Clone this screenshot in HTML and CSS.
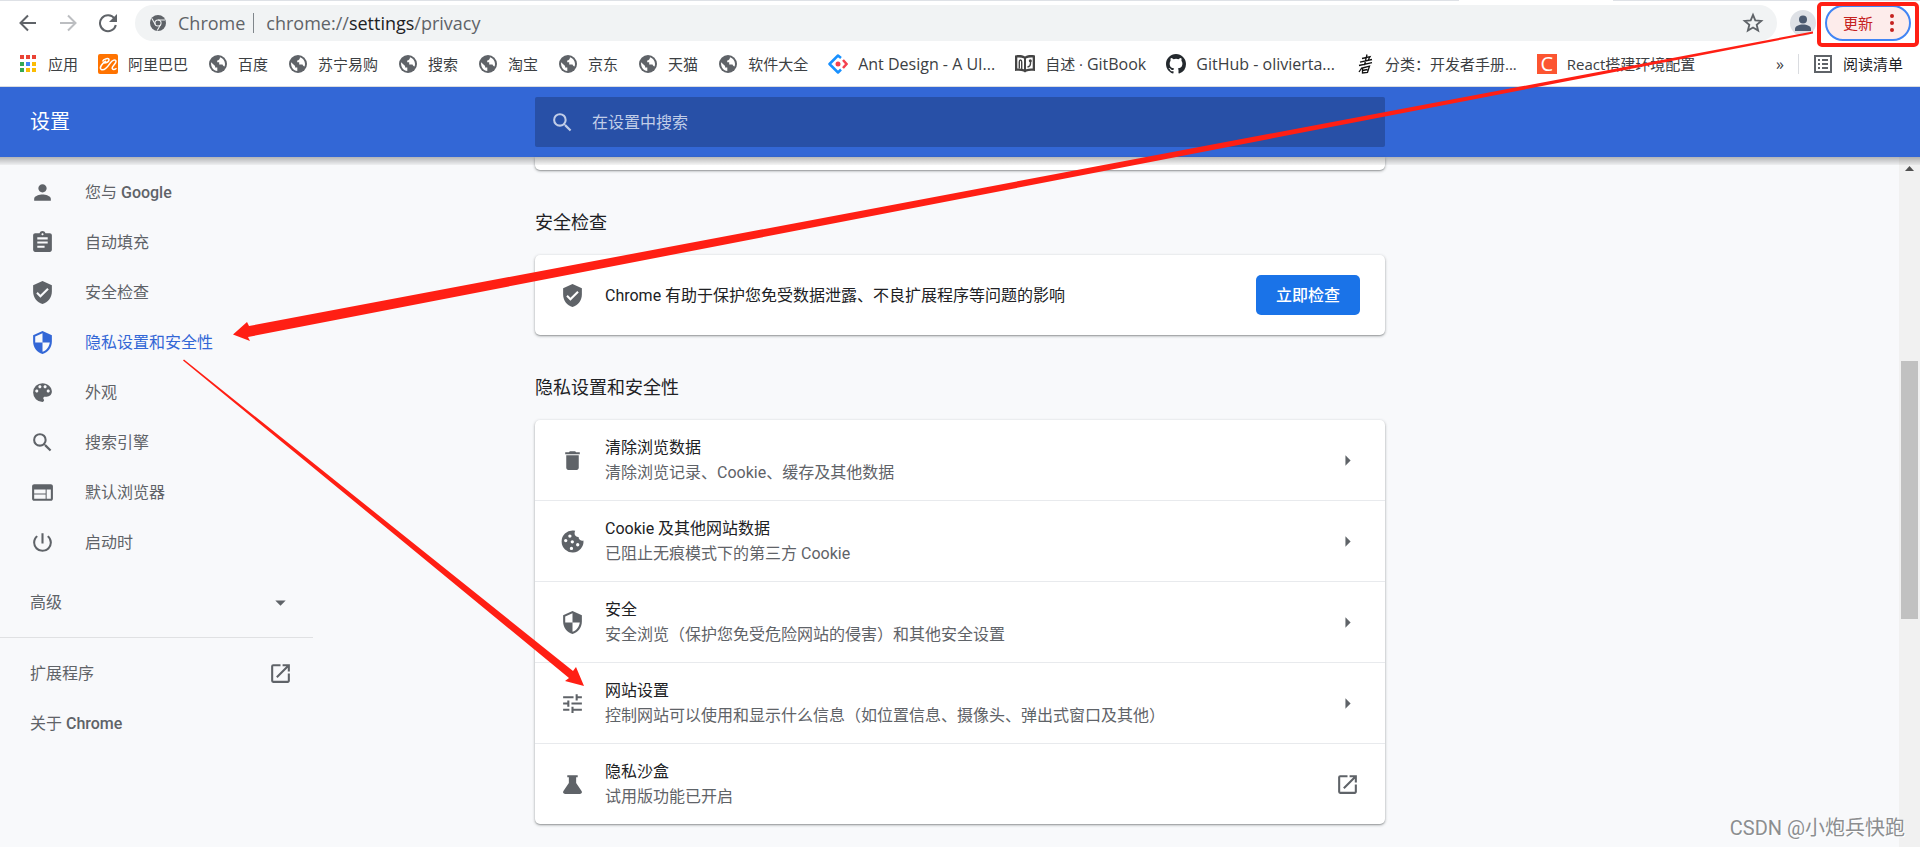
FILE: index.html
```html
<!DOCTYPE html>
<html lang="zh-CN">
<head>
<meta charset="utf-8">
<title>设置 - 隐私设置和安全性</title>
<link rel="stylesheet" href="styles.css">
</head>
<body>
<svg class="sprite" aria-hidden="true">
  <symbol id="globe" viewBox="0 0 20 20"><circle cx="10" cy="10" r="9" fill="#5f6368"/><path d="M12 3.200c2.900 1 5 3.700 5 6.800 0 1-.2 1.600-.5 2.400-.9-.2-1.600-.9-2-2H11.200V8.300h-2V6.600c1.600-.2 2.800-1.400 2.800-3.400zM3.100 8.300l4 3.700v1.500h2.200v3.400C5.700 16.700 2.600 13.500 3.100 8.300z" fill="#fff"/></symbol>
  <symbol id="search" viewBox="0 0 24 24"><path d="M15.500 14h-.79l-.28-.27A6.471 6.471 0 0 0 16 9.500 6.500 6.500 0 1 0 9.500 16c1.610 0 3.090-.59 4.230-1.570l.27.28v.79l5 4.990L20.490 19l-4.990-5zm-6 0C7.010 14 5 11.990 5 9.500S7.010 5 9.500 5 14 7.010 14 9.500 11.990 14 9.500 14z"/></symbol>
  <symbol id="person" viewBox="0 0 24 24"><path d="M12 12c2.210 0 4-1.790 4-4s-1.790-4-4-4-4 1.790-4 4 1.790 4 4 4zm0 2c-2.670 0-8 1.340-8 4v2h16v-2c0-2.660-5.330-4-8-4z"/></symbol>
  <symbol id="assignment" viewBox="0 0 24 24"><path d="M19 3h-4.180C14.400 1.840 13.300 1 12 1c-1.300 0-2.400.84-2.820 2H5c-1.100 0-2 .9-2 2v14c0 1.100.9 2 2 2h14c1.100 0 2-.9 2-2V5c0-1.100-.9-2-2-2zm-7 0c.55 0 1 .45 1 1s-.45 1-1 1-1-.45-1-1 .45-1 1-1zm2 14H7v-2h7v2zm3-4H7v-2h10v2zm0-4H7V7h10v2z"/></symbol>
  <symbol id="verified" viewBox="0 0 24 24"><path d="M12 1L3 5v6c0 5.550 3.840 10.740 9 12 5.160-1.260 9-6.450 9-12V5l-9-4zm-2 16l-4-4 1.410-1.410L10 14.170l6.590-6.590L18 9l-8 8z"/></symbol>
  <symbol id="shield" viewBox="0 0 24 24"><path d="M12 1L3 5v6c0 5.550 3.840 10.740 9 12 5.160-1.260 9-6.450 9-12V5l-9-4zm0 10.990h7c-.53 4.120-3.280 7.790-7 8.940V12H5V6.300l7-3.110v8.800z"/></symbol>
  <symbol id="palette" viewBox="0 0 24 24"><path d="M12 3a9 9 0 0 0 0 18c.83 0 1.500-.67 1.500-1.500 0-.39-.15-.74-.39-1.010-.23-.26-.38-.61-.38-.99 0-.83.67-1.500 1.500-1.500H16c2.760 0 5-2.240 5-5 0-4.420-4.030-8-9-8zm-5.500 9c-.83 0-1.500-.67-1.500-1.500S5.670 9 6.500 9 8 9.670 8 10.500 7.330 12 6.500 12zm3-4C8.670 8 8 7.330 8 6.500S8.670 5 9.500 5s1.500.67 1.500 1.500S10.330 8 9.500 8zm5 0c-.83 0-1.500-.67-1.500-1.500S13.670 5 14.500 5s1.500.67 1.500 1.500S15.330 8 14.500 8zm3 4c-.83 0-1.500-.67-1.500-1.500S16.670 9 17.500 9s1.500.67 1.500 1.500-.67 1.500-1.500 1.500z"/></symbol>
  <symbol id="web" viewBox="0 0 24 24"><path d="M20 4H4c-1.100 0-1.990.9-1.990 2L2 18c0 1.100.9 2 2 2h16c1.100 0 2-.9 2-2V6c0-1.100-.9-2-2-2zm-5 14H4v-4h11v4zm0-5H4V9h11v4zm5 5h-4V9h4v9z"/></symbol>
  <symbol id="power" viewBox="0 0 24 24"><path d="M13 3h-2v10h2V3zm4.830 2.170l-1.420 1.420A6.920 6.920 0 0 1 19 12a7 7 0 1 1-11.420-5.420L6.170 5.170A8.932 8.932 0 0 0 3 12a9 9 0 0 0 18 0c0-2.740-1.230-5.180-3.170-6.830z"/></symbol>
  <symbol id="down" viewBox="0 0 24 24"><path d="M7 10l5 5 5-5z"/></symbol>
  <symbol id="right" viewBox="0 0 24 24"><path d="M10 7l5 5-5 5z"/></symbol>
  <symbol id="launch" viewBox="0 0 24 24"><path d="M19 19H5V5h7V3H5a2 2 0 0 0-2 2v14a2 2 0 0 0 2 2h14c1.100 0 2-.9 2-2v-7h-2v7zM14 3v2h3.590l-9.830 9.830 1.410 1.410L19 6.410V10h2V3h-7z"/></symbol>
  <symbol id="trash" viewBox="0 0 24 24"><path d="M6 19c0 1.100.9 2 2 2h8c1.100 0 2-.9 2-2V7H6v12zM19 4h-3.500l-1-1h-5l-1 1H5v2h14V4z"/></symbol>
  <symbol id="cookie" viewBox="0 0 24 24"><path fill-rule="evenodd" d="M12.500 1.500A10.500 10.500 0 1 0 22.500 11a3.500 3.500 0 0 1-4.700-3.300 3.500 3.500 0 0 1-3.800-3.500c0-1 .1-1.700.6-2.500a9 9 0 0 0-2.100-.2zM9.500 5.200a1.600 1.600 0 1 1 0 3.200 1.600 1.600 0 0 1 0-3.200zM5.500 9.500a1.600 1.600 0 1 1 0 3.200 1.600 1.600 0 0 1 0-3.200zM11.800 10.700a1.600 1.600 0 1 1 0 3.200 1.600 1.600 0 0 1 0-3.200zM17 13.500a1.600 1.600 0 1 1 0 3.200 1.600 1.600 0 0 1 0-3.200zM11 17a1.600 1.600 0 1 1 0 3.200 1.600 1.600 0 0 1 0-3.200z"/></symbol>
  <symbol id="tune" viewBox="0 0 24 24"><path d="M3 17v2h6v-2H3zM3 5v2h10V5H3zm10 16v-2h8v-2h-8v-2h-2v6h2zM7 9v2H3v2h4v2h2V9H7zm14 4v-2H11v2h10zm-6-4h2V7h4V5h-4V3h-2v6z"/></symbol>
  <symbol id="flask" viewBox="0 0 24 24"><path d="M7 3h10v2h-1.500v5.500l5.200 7.800c.9 1.300 0 2.700-1.500 2.700H4.800c-1.500 0-2.400-1.400-1.500-2.700l5.200-7.800V5H7z"/></symbol>
</svg>

<header class="browser">
  <div class="toolbar">
    <nav class="history">
      <button class="tool" type="button" aria-label="后退"><svg viewBox="0 0 20 20"><path d="M18 10H3M10 2.500L2.500 10l7.500 7.500" fill="none" stroke="#5f6368" stroke-width="2"/></svg></button>
      <button class="tool" type="button" aria-label="前进"><svg viewBox="0 0 20 20"><path d="M2 10h15M10 2.500l7.500 7.500-7.500 7.500" fill="none" stroke="#bcbec1" stroke-width="2"/></svg></button>
      <button class="tool" type="button" aria-label="重新加载"><svg viewBox="0 0 20 20"><path d="M16.500 5.500A8 8 0 1 0 17.800 12" fill="none" stroke="#5f6368" stroke-width="2"/><path d="M19 1v8h-8z" fill="#5f6368"/></svg></button>
    </nav>
    <div class="omnibox">
      <svg class="site" viewBox="0 0 24 24"><circle cx="12" cy="12" r="12" fill="#5f6368"/><circle cx="12" cy="12" r="4.600" fill="none" stroke="#f1f3f4" stroke-width="1.600"/><path d="M12 7.400h10.500M8 14.300L2.800 5.300M16 14.300l-5.200 9" stroke="#f1f3f4" stroke-width="1.600"/></svg>
      <span class="origin">Chrome</span>
      <span class="bar"></span>
      <span class="url">chrome://<b>settings</b>/privacy</span>
      <button class="star" type="button" aria-label="为此标签页添加书签"><svg viewBox="0 0 24 24"><path d="M12 3.200l2.500 6 6.500.5-5 4.200 1.600 6.400L12 16.900l-5.600 3.400L8 13.900 3 9.700l6.500-.5z" fill="none" stroke="#5f6368" stroke-width="2"/></svg></button>
    </div>
    <button class="avatar" type="button" aria-label="个人资料"><svg viewBox="0 0 26 26"><circle cx="13" cy="13" r="13" fill="#dee1e6"/><circle cx="13" cy="9.500" r="4" fill="#4b5a70"/><path d="M5 21v-2c0-3 4-4.500 8-4.500s8 1.500 8 4.500v2z" fill="#4b5a70"/></svg></button>
    <button class="update" type="button">更新<svg viewBox="0 0 4 18"><circle cx="2" cy="2" r="2"/><circle cx="2" cy="9" r="2"/><circle cx="2" cy="16" r="2"/></svg></button>
  </div>
  <nav class="bookmarks">
    <a href="#"><svg viewBox="0 0 20 20"><path fill="#ea4335" d="M2 1h4v4H2zM8 1h4v4H8zM14 1h4v4h-4z"/><path fill="#34a853" d="M2 8h4v4H2zM2 14h4v4H2z"/><path fill="#4285f4" d="M8 8h4v4H8z"/><path fill="#fbbc04" d="M14 8h4v4h-4zM8 14h4v4H8zM14 14h4v4h-4z"/></svg>应用</a>
    <a href="#"><svg viewBox="0 0 20 20"><rect width="20" height="20" rx="2" fill="#ff7300"/><path d="M4.500 7.500C5.500 4.500 11.500 3.500 11 6c-.4 1.800-3 2.800-5 2.900M8 7C4.500 9 1 13.500 3 15.300c2.500 1.600 6.500-2.300 9-6 2.200-3.300 5.800-4.500 6-2 .2 2.700-4.500 5-3.800 7.200.5 1.500 2.800 1 4.300-.3" fill="none" stroke="#fff" stroke-width="1.500"/></svg>阿里巴巴</a>
    <a href="#"><svg><use href="#globe"/></svg>百度</a>
    <a href="#"><svg><use href="#globe"/></svg>苏宁易购</a>
    <a href="#"><svg><use href="#globe"/></svg>搜索</a>
    <a href="#"><svg><use href="#globe"/></svg>淘宝</a>
    <a href="#"><svg><use href="#globe"/></svg>京东</a>
    <a href="#"><svg><use href="#globe"/></svg>天猫</a>
    <a href="#"><svg><use href="#globe"/></svg>软件大全</a>
    <a href="#" class="latin"><svg viewBox="0 0 20 20"><path d="M13 4L10 1.500 1.500 10l8.500 8.500 3-3" fill="none" stroke="#1890ff" stroke-width="2.500" stroke-linejoin="round"/><path d="M15 6l3.500 4-3.500 4" fill="none" stroke="#f5414f" stroke-width="2.500"/><circle cx="10" cy="10" r="2.500" fill="#f5414f"/></svg>Ant Design - A UI...</a>
    <a href="#"><svg viewBox="0 0 20 20"><path d="M0 1.500c3.500-.8 7-.6 10 1 3-1.600 6.500-1.800 10-1V17c-3.500-.6-6.500-.4-8.500.6L10 18.500l-1.500-.9C6.500 16.600 3.500 16.400 0 17z" fill="#444"/><path d="M2.300 3.500c2.300-.3 4.700 0 6.700 1v10.800c-2-.8-4.400-1-6.700-.8zM17.700 3.500c-2.300-.3-4.700 0-6.700 1v10.800c2-.8 4.400-1 6.700-.8z" fill="#fff"/><path d="M4.300 14.500V8q0-2 1.200-2t1.200 2v7M15.500 6.500v3q0 3-3 3.500" fill="none" stroke="#444" stroke-width="1.400"/><circle cx="15.300" cy="6.700" r="1.500" fill="#444"/></svg><span>自述 · <span class="latin">GitBook</span></span></a>
    <a href="#" class="latin"><svg viewBox="0 0 16 16"><path fill="#24292e" d="M8 0C3.580 0 0 3.580 0 8c0 3.540 2.290 6.530 5.470 7.590.4.070.55-.17.55-.38 0-.19-.01-.82-.01-1.490-2.010.37-2.530-.49-2.690-.94-.09-.23-.48-.94-.82-1.130-.28-.15-.68-.52-.01-.53.63-.01 1.080.58 1.230.82.72 1.210 1.870.87 2.330.66.070-.52.28-.87.51-1.070-1.780-.2-3.640-.89-3.640-3.950 0-.87.31-1.590.82-2.150-.08-.2-.36-1.020.08-2.120 0 0 .67-.21 2.200.82a7.600 7.600 0 0 1 4 0c1.530-1.040 2.200-.82 2.200-.82.44 1.100.16 1.920.08 2.120.51.56.82 1.270.82 2.150 0 3.070-1.870 3.750-3.650 3.950.29.25.54.73.54 1.480 0 1.070-.01 1.930-.01 2.200 0 .21.15.46.55.38A8.010 8.010 0 0 0 16 8c0-4.420-3.580-8-8-8z"/></svg>GitHub - olivierta...</a>
    <a href="#"><svg viewBox="0 0 20 20"><path d="M7 4.500l8-1.800-2 3.600M5 8.200l12-2.700M4 11.500l13-2.800M12 .5L9.500 11M7 13.500L4 18M7.500 14l7-1.800-2 6.300-5 .5zM7.500 16.500l5-1" fill="none" stroke="#111" stroke-width="1.300"/></svg>分类：开发者手册...</a>
    <a href="#"><span class="c-logo">C</span>React搭建环境配置</a>
    <div class="bookmarks-end">
      <button class="more" type="button" aria-label="更多书签">»</button>
      <a class="reading" href="#"><svg viewBox="0 0 20 20"><path d="M2 2h16v16H2z" fill="none" stroke="#5f6368" stroke-width="2"/><path d="M5 6h2M9 6h6M5 10h2M9 10h6M5 14h2M9 14h6" stroke="#5f6368" stroke-width="2"/></svg>阅读清单</a>
    </div>
  </nav>
</header>

<div class="appbar">
  <h1>设置</h1>
  <label class="search"><svg><use href="#search"/></svg><input type="text" placeholder="在设置中搜索" aria-label="在设置中搜索"></label>
</div>

<div class="content">
  <nav class="sidebar">
    <a href="#"><svg><use href="#person"/></svg><span>您与 <b>Google</b></span></a>
    <a href="#"><svg><use href="#assignment"/></svg>自动填充</a>
    <a href="#"><svg><use href="#verified"/></svg>安全检查</a>
    <a href="#" class="active"><svg><use href="#shield"/></svg>隐私设置和安全性</a>
    <a href="#"><svg><use href="#palette"/></svg>外观</a>
    <a href="#"><svg><use href="#search"/></svg>搜索引擎</a>
    <a href="#"><svg><use href="#web"/></svg>默认浏览器</a>
    <a href="#"><svg><use href="#power"/></svg>启动时</a>
    <button class="wide advanced" type="button">高级<svg><use href="#down"/></svg></button>
    <a href="#" class="wide">扩展程序<svg><use href="#launch"/></svg></a>
    <a href="#" class="wide"><span>关于 <b>Chrome</b></span></a>
  </nav>

  <main>
    <div class="card stub"></div>
    <h2>安全检查</h2>
    <section class="card">
      <div class="row">
        <svg><use href="#verified"/></svg>
        <p class="text">Chrome 有助于保护您免受数据泄露、不良扩展程序等问题的影响</p>
        <button class="primary" type="button">立即检查</button>
      </div>
    </section>
    <h2>隐私设置和安全性</h2>
    <section class="card">
      <a href="#" class="row"><svg><use href="#trash"/></svg><span class="text">清除浏览数据<small>清除浏览记录、Cookie、缓存及其他数据</small></span><svg><use href="#right"/></svg></a>
      <a href="#" class="row"><svg><use href="#cookie"/></svg><span class="text">Cookie 及其他网站数据<small>已阻止无痕模式下的第三方 Cookie</small></span><svg><use href="#right"/></svg></a>
      <a href="#" class="row"><svg><use href="#shield"/></svg><span class="text">安全<small>安全浏览（保护您免受危险网站的侵害）和其他安全设置</small></span><svg><use href="#right"/></svg></a>
      <a href="#" class="row"><svg><use href="#tune"/></svg><span class="text">网站设置<small>控制网站可以使用和显示什么信息（如位置信息、摄像头、弹出式窗口及其他）</small></span><svg><use href="#right"/></svg></a>
      <a href="#" class="row"><svg><use href="#flask"/></svg><span class="text">隐私沙盒<small>试用版功能已开启</small></span><svg><use href="#launch"/></svg></a>
    </section>
  </main>

  <div class="scrollbar"><svg viewBox="0 0 21 21"><path d="M6 14l4.500-5 4.500 5z" fill="#505050"/></svg><span class="thumb"></span></div>
</div>

<svg class="annotations" width="1920" height="847" viewBox="0 0 1920 847" aria-hidden="true">
  <rect x="1819" y="4" width="98" height="41" rx="3" fill="none" stroke="#ff1f14" stroke-width="4"/>
  <path fill="#ff1f14" d="M1813 31.500V33.500L248 337l2 4-17-6.500L247 322l2 4z"/>
  <path fill="#ff1f14" d="M183 360.500l1-1L573 671l3-4 8 19-19-5 4-3z"/>
</svg>
<p class="watermark">CSDN @小炮兵快跑</p>
</body>
</html>
```
FILE: styles.css
```css
* { box-sizing: border-box; }

body {
  margin: 0;
  min-height: 100vh;
  display: flex;
  flex-direction: column;
  position: relative;
  overflow: hidden;
  background: #f8f9fb;
  color: #202124;
  font: 16px/25px Roboto, "Noto Sans CJK SC", sans-serif;
}

a { color: inherit; text-decoration: none; }
button { border: 0; padding: 0; background: none; color: inherit; font: inherit; text-align: left; }
svg { display: block; flex: none; fill: currentColor; }
h1, h2, p { margin: 0; font-weight: 400; }
.sprite { position: absolute; width: 0; height: 0; }

/* Browser frame; the top line is broken under the active tab */
.browser {
  padding-top: 1px;
  background: linear-gradient(90deg, #dee1e6 76%, #fff 76% 84%, #dee1e6 84%) top / 100% 1px no-repeat #fff;
  border-bottom: 1px solid #dadce0;
  color: #3c4043;
  font-family: "Open Sans", "Noto Sans CJK SC", sans-serif;
}
.toolbar { display: flex; align-items: center; padding: 4px 9px 5px 18px; }
.history { display: flex; gap: 20px; padding-right: 17px; }
.tool svg { width: 20px; height: 20px; }
.omnibox {
  flex: 1;
  display: flex;
  align-items: center;
  height: 36px;
  padding: 0 13px 0 15px;
  border-radius: 18px;
  background: #f1f3f4;
  color: #5f6368;
  font-size: 18px;
}
.site { width: 16px; height: 16px; margin-right: 12px; }
.bar { width: 1px; height: 20px; margin: 0 12px 0 8px; background: #80868b; }
.url b { color: #202124; font-weight: 400; }
.star { margin-left: auto; }
.star svg { width: 22px; height: 22px; }
.avatar { margin: 0 9px 0 13px; }
.avatar svg { width: 26px; height: 26px; }
.update {
  display: flex;
  align-items: center;
  justify-content: space-between;
  width: 86px;
  height: 36px;
  padding: 0 15px 0 16px;
  border: 2px solid #4285f4;
  border-radius: 18px;
  background: #fdeceb;
  color: #c5221f;
  font-size: 15px;
}
.update svg { width: 4px; height: 18px; }
.bookmarks {
  display: flex;
  align-items: center;
  gap: 20px;
  height: 40px;
  padding: 0 17px 4px 18px;
  font-size: 15px;
  white-space: nowrap;
}
.bookmarks a { display: flex; align-items: center; gap: 10px; }
.bookmarks .latin { font-size: 16px; }
.bookmarks svg { width: 20px; height: 20px; }
.c-logo { width: 20px; background: #fc5531; color: #fff; font-size: 20px; line-height: 20px; text-align: center; }
.bookmarks-end { display: flex; align-items: center; gap: 14px; margin-left: auto; }
.more { font-size: 16px; }
.bookmarks .reading { padding-left: 14px; border-left: 1px solid #dadce0; line-height: 20px; color: #202124; }

/* Settings header */
.appbar, .content { display: grid; grid-template-columns: minmax(313px, 1fr) minmax(0, 850px) minmax(21px, 1fr); }
.appbar { align-items: center; padding: 10px 0; background: #3367d6; color: #fff; }
h1 { padding-left: 30px; font-size: 20px; }
.search {
  display: flex;
  align-items: center;
  gap: 17px;
  height: 50px;
  padding: 0 15px;
  border-radius: 2px;
  background: #2850a7;
  color: #c1cde8;
}
.search svg { width: 25px; height: 25px; }
.search input { flex: 1; border: 0; padding: 0; outline: 0; background: none; color: inherit; font: inherit; }
.search input::placeholder { color: inherit; opacity: 1; }

/* Settings body */
.content { flex: 1; position: relative; }
.content::before {
  content: "";
  position: absolute;
  inset: 0 0 auto;
  height: 8px;
  background: linear-gradient(rgba(0, 0, 0, .28), rgba(0, 0, 0, .04));
}
.sidebar { width: 313px; padding-top: 10px; color: #5f6368; }
.sidebar b { font-weight: 500; }
.sidebar a, .advanced { display: flex; align-items: center; gap: 30px; height: 50px; padding-left: 30px; }
.sidebar svg { width: 25px; height: 25px; }
.sidebar .active { color: #3367d6; }
.sidebar .wide { justify-content: space-between; padding-right: 20px; }
.sidebar .advanced {
  width: 100%;
  height: 71px;
  margin-bottom: 10px;
  border-bottom: 1px solid #e0e1e3;
}

.card { border-radius: 5px; background: #fff; box-shadow: 0 1px 3px rgba(60, 64, 67, .45), 0 1px 1px rgba(60, 64, 67, .2); }
.stub { height: 13px; border-radius: 0 0 5px 5px; }
h2 { padding: 40px 0 20px; font-size: 18px; }
.row { display: flex; align-items: center; min-height: 80px; padding: 0 25px; }
.row + .row { min-height: 81px; border-top: 1px solid #e8eaed; }
.row svg { width: 25px; height: 25px; color: #5f6368; }
.text { flex: 1; padding-left: 20px; }
.text small { display: block; color: #5f6368; font-size: 16px; }
.primary {
  height: 40px;
  padding: 0 20px;
  border-radius: 5px;
  background: #1a73e8;
  color: #fff;
  font-weight: 500;
}

.scrollbar { justify-self: end; width: 21px; background: #f1f1f1; }
.thumb { display: block; height: 258px; margin: 183px 2px 0; background: #c1c1c1; }

.annotations { position: absolute; top: 0; left: 0; pointer-events: none; }
.watermark { position: absolute; right: 15px; bottom: 6px; color: #8c8e90; font-size: 20px; text-shadow: 1px 1px 0 #fff; }
```
